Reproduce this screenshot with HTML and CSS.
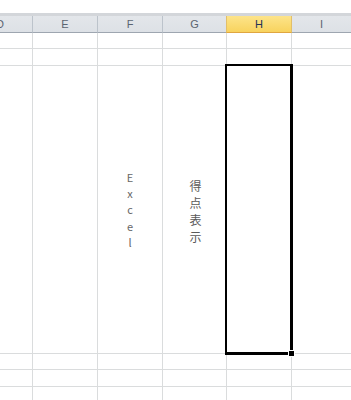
FILE: index.html
```html
<!DOCTYPE html>
<html lang="ja">
<head>
<meta charset="utf-8">
<link rel="stylesheet" href="styles.css">
</head>
<body>
<div class="sheet">
  <div class="topgap"></div>
  <div class="topline"></div>
  <div class="grid">
    <div class="hd cd"><span class="dcut">D</span></div>
    <div class="hd">E</div>
    <div class="hd">F</div>
    <div class="hd">G</div>
    <div class="hd sel">H</div>
    <div class="hd last">I</div>

    <div class="c r1"></div><div class="c r1"></div><div class="c r1"></div><div class="c r1"></div><div class="c r1"></div><div class="c r1 last"></div>
    <div class="c r2"></div><div class="c r2"></div><div class="c r2"></div><div class="c r2"></div><div class="c r2"></div><div class="c r2 last"></div>

    <div class="c big"></div>
    <div class="c big"></div>
    <div class="c big"><div class="vtext latin"><span>E</span><span>x</span><span>c</span><span>e</span><span>l</span></div></div>
    <div class="c big"><div class="vtext jp"><span>得</span><span>点</span><span>表</span><span>示</span></div></div>
    <div class="c big active"><div class="selbox"><div class="handle"></div></div></div>
    <div class="c big last"></div>

    <div class="c r3"></div><div class="c r3"></div><div class="c r3"></div><div class="c r3"></div><div class="c r3"></div><div class="c r3 last"></div>
    <div class="c r3"></div><div class="c r3"></div><div class="c r3"></div><div class="c r3"></div><div class="c r3"></div><div class="c r3 last"></div>
    <div class="c r3"></div><div class="c r3"></div><div class="c r3"></div><div class="c r3"></div><div class="c r3"></div><div class="c r3 last"></div>
  </div>
</div>
</body>
</html>
```

FILE: styles.css
```css
html, body {
  margin: 0;
  padding: 0;
  background: #ffffff;
}
.sheet {
  width: 351px;
  height: 400px;
  overflow: hidden;
  font-family: "Liberation Sans", Arial, sans-serif;
}
.topgap {
  height: 13px;
  background: #ffffff;
}
.topline {
  height: 3px;
  background: #d3d6da;
}
.grid {
  display: grid;
  grid-template-columns: 33px 65px 65px 64px 65px 1fr;
  grid-template-rows: 17px 16px 17px 288px 16px 17px 17px;
}
.hd {
  box-sizing: border-box;
  background: linear-gradient(#e3e6ea, #dde1e6);
  border-right: 1px solid #bcc3cb;
  border-bottom: 1px solid #9ea6b0;
  display: flex;
  align-items: center;
  justify-content: center;
  font-size: 11px;
  color: #5b6470;
  overflow: hidden;
}
.hd.cd {
  justify-content: flex-start;
}
.dcut {
  margin-left: -4px;
}
.hd.sel {
  background: linear-gradient(#fde48a, #f8d35e);
  border-right: 1px solid #e2bf6a;
  border-left: 1px solid #e2bf6a;
  margin-left: -1px;
  border-bottom: 1px solid #e0a640;
  color: #223355;
}
.hd.last, .c.last {
  border-right: none;
}
.c {
  box-sizing: border-box;
  border-right: 1px solid #dadcdd;
  border-bottom: 1px solid #dadcdd;
  background: #ffffff;
  position: relative;
}
.c.active {
  z-index: 2;
}
.big {
  display: flex;
  align-items: center;
  justify-content: center;
}
.vtext {
  display: flex;
  flex-direction: column;
  align-items: center;
  color: #666666;
}
.vtext.latin {
  font-family: "Noto Sans CJK JP", "DejaVu Sans", sans-serif;
  font-size: 11px;
  line-height: 16.3px;
  margin-top: 0;
}
.vtext.jp {
  font-family: "Noto Sans CJK JP", sans-serif;
  font-size: 12px;
  line-height: 17px;
  margin-top: 3px;
  margin-left: 2px;
  color: #5a5a5a;
}
.selbox {
  position: absolute;
  left: -2px;
  top: -2px;
  right: -2px;
  bottom: -2px;
  border: 2px solid #000000;
  border-right-width: 3px;
  border-bottom-width: 3px;
}
.handle {
  position: absolute;
  right: -5px;
  bottom: -5px;
  width: 5px;
  height: 5px;
  background: #000000;
  border: 1px solid #ffffff;
}
```
